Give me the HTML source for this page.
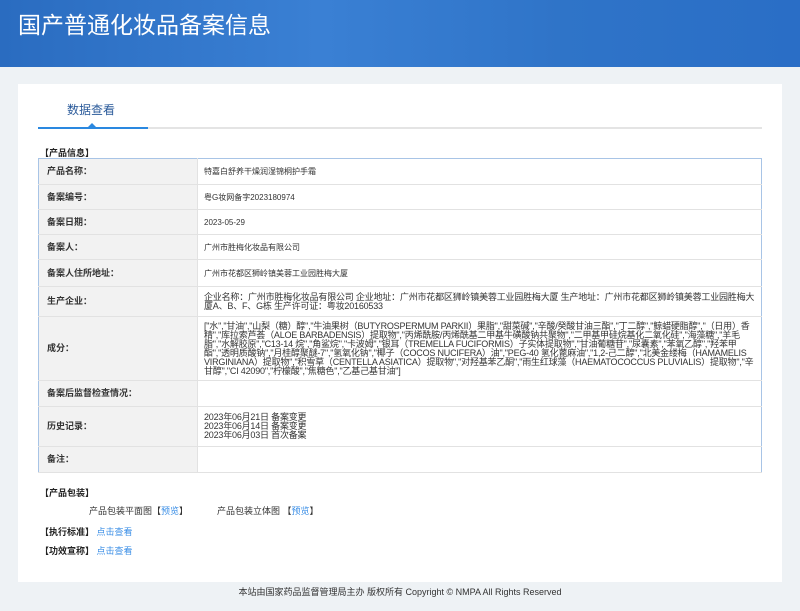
<!DOCTYPE html>
<html><head><meta charset="utf-8"><style>
*{margin:0;padding:0;box-sizing:border-box}
body{width:800px;height:611px;background:#eef2f5;font-family:"Liberation Sans","Noto Sans CJK SC",sans-serif;font-size:9px;color:#333;position:relative;overflow:hidden}
.hd{position:absolute;left:0;top:0;width:800px;height:67px;background:linear-gradient(90deg,#2a6cc0,#3a80d4 40%,#2f74c8 70%,#2a6ec6)}
.hd h1{position:absolute;left:18px;top:6px;color:#fff;font-size:23px;font-weight:normal;letter-spacing:0px}
.card{position:absolute;left:18px;top:84px;width:764px;height:498px;background:#fff}
.tab{position:absolute;left:67px;top:101px;font-size:12px;color:#2a5a9a}
.line{position:absolute;left:38px;top:127px;width:724px;height:2px;background:#e4e4e4}
.line b{position:absolute;left:0;top:0;width:110px;height:2px;background:#2a88e0}
.tri{position:absolute;left:88px;top:123px;width:0;height:0;border-left:4px solid transparent;border-right:4px solid transparent;border-bottom:4px solid #2a88e0}
.sec{position:absolute;left:40px;font-weight:bold;font-size:9px;color:#222}
table{position:absolute;left:38px;top:158px;width:724px;border-collapse:collapse;border:1px solid #a8c4e6}
td{border-bottom:1px solid #e2e2e2;vertical-align:middle;font-size:8px;line-height:9px}
td.l{width:159px;background:#f2f2f2;font-weight:bold;padding-left:8px;font-size:9px;border-right:1px solid #e2e2e2}
td.v{padding:0 6px}
td.big{font-size:9px;line-height:9px;letter-spacing:-0.2px}
.a{color:#3a8ee6}
.ft{position:absolute;top:585px;left:0;width:800px;text-align:center;font-size:9px;color:#333}
</style></head><body>
<div class="hd"><h1>国产普通化妆品备案信息</h1></div>
<div class="card"></div>
<div class="tab">数据查看</div>
<div class="line"><b></b></div><div class="tri"></div>
<div class="sec" style="top:146px">【产品信息】</div>
<table>
<tr style="height:26px"><td class="l">产品名称：</td><td class="v">特嘉白舒养干燥润湿锦桐护手霜</td></tr>
<tr style="height:25px"><td class="l">备案编号：</td><td class="v">粤G妆网备字2023180974</td></tr>
<tr style="height:25px"><td class="l">备案日期：</td><td class="v">2023-05-29</td></tr>
<tr style="height:25px"><td class="l">备案人：</td><td class="v">广州市胜梅化妆品有限公司</td></tr>
<tr style="height:27px"><td class="l">备案人住所地址：</td><td class="v">广州市花都区狮岭镇美蓉工业园胜梅大厦</td></tr>
<tr style="height:30px"><td class="l">生产企业：</td><td class="v big">企业名称：广州市胜梅化妆品有限公司 企业地址：广州市花都区狮岭镇美蓉工业园胜梅大厦 生产地址：广州市花都区狮岭镇美蓉工业园胜梅大厦A、B、F、G栋 生产许可证：粤妆20160533</td></tr>
<tr style="height:64px"><td class="l">成分：</td><td class="v big">["水","甘油","山梨（糖）醇","牛油果树（BUTYROSPERMUM PARKII）果脂","甜菜碱","辛酸/癸酸甘油三酯","丁二醇","鲸蜡硬脂醇","（日用）香精","库拉索芦荟（ALOE BARBADENSIS）提取物","丙烯酰胺/丙烯酰基二甲基牛磺酸钠共聚物","二甲基甲硅烷基化二氧化硅","海藻糖","羊毛脂","水解胶原","C13-14 烷","角鲨烷","卡波姆","银耳（TREMELLA FUCIFORMIS）子实体提取物","甘油葡糖苷","尿囊素","苯氧乙醇","羟苯甲酯","透明质酸钠","月桂醇聚醚-7","氢氧化钠","椰子（COCOS NUCIFERA）油","PEG-40 氢化蓖麻油","1,2-己二醇","北美金缕梅（HAMAMELIS VIRGINIANA）提取物","积雪草（CENTELLA ASIATICA）提取物","对羟基苯乙酮","雨生红球藻（HAEMATOCOCCUS PLUVIALIS）提取物","辛甘醇","CI 42090","柠檬酸","焦糖色","乙基己基甘油"]</td></tr>
<tr style="height:26px"><td class="l">备案后监督检查情况：</td><td class="v"></td></tr>
<tr style="height:40px"><td class="l">历史记录：</td><td class="v big">2023年06月21日 备案变更<br>2023年06月14日 备案变更<br>2023年06月03日 首次备案</td></tr>
<tr style="height:26px"><td class="l">备注：</td><td class="v"></td></tr>
</table>
<div class="sec" style="top:486px">【产品包装】</div>
<div style="position:absolute;left:89px;top:504px">产品包装平面图【<span class="a">预览</span>】</div>
<div style="position:absolute;left:217px;top:504px">产品包装立体图 【<span class="a">预览</span>】</div>
<div class="sec" style="top:525px">【执行标准】 <span class="a" style="font-weight:normal">点击查看</span></div>
<div class="sec" style="top:544px">【功效宣称】 <span class="a" style="font-weight:normal">点击查看</span></div>
<div class="ft">本站由国家药品监督管理局主办 版权所有 Copyright © NMPA All Rights Reserved</div>
</body></html>
